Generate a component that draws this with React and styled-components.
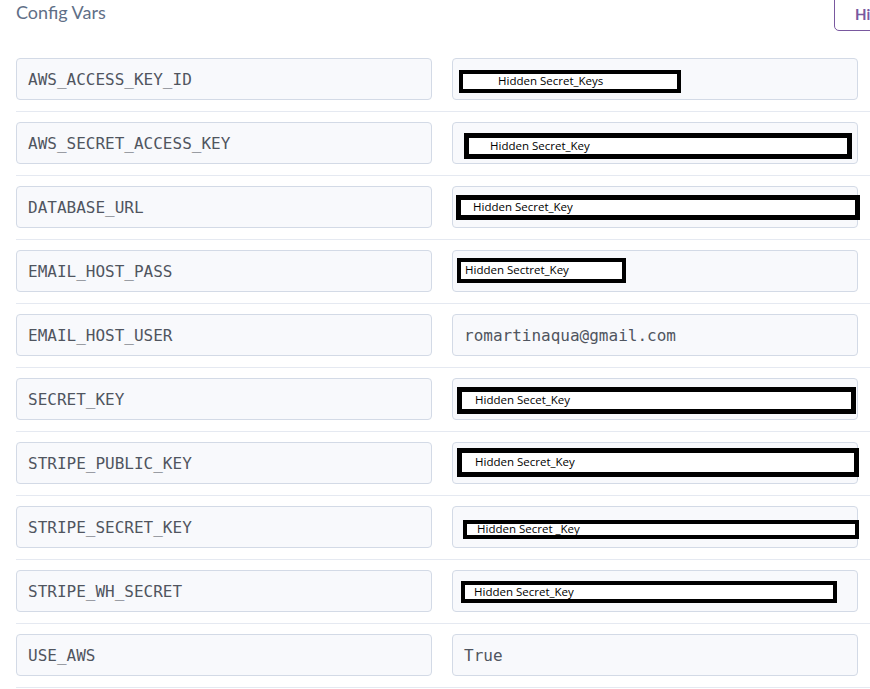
import React from "react";
import styled, { createGlobalStyle } from "styled-components";

const GlobalStyle = createGlobalStyle`
  html, body { margin: 0; padding: 0; background: #ffffff; overflow: hidden; }
  body { font-family: Lato, "Open Sans", sans-serif; }
`;

const Page = styled.div`
  width: 1000px;
  padding-left: 16px;
  box-sizing: border-box;
`;

const Header = styled.div`
  display: flex;
  align-items: flex-start;
  height: 48px;
`;

const Title = styled.h2`
  flex: 0 0 818px;
  margin: 0;
  font-family: Lato, sans-serif;
  font-weight: 400;
  font-size: 18px;
  line-height: 24px;
  color: #5f6f87;
  white-space: nowrap;
`;

const HideButton = styled.button`
  flex: 0 0 auto;
  margin-top: -10px;
  height: 41px;
  padding: 6px 20px 0;
  border: 1px solid #79589f;
  border-radius: 5px;
  background: #ffffff;
  color: #79589f;
  font-family: Lato, sans-serif;
  font-weight: 700;
  font-size: 15px;
  white-space: nowrap;
`;

const Row = styled.div`
  display: grid;
  grid-template-columns: 416px 406px;
  column-gap: 20px;
  padding: 10px 0 11px;
  border-bottom: 1px solid #e5e9f1;
`;

const Field = styled.div`
  position: relative;
  height: 42px;
  box-sizing: border-box;
  border: 1px solid #d3dae6;
  border-radius: 4px;
  background: #f8f9fc;
  padding: 0 11px;
  display: flex;
  align-items: center;
  font-family: "DejaVu Sans Mono", "Liberation Mono", monospace;
  font-size: 16px;
  color: #50555f;
`;

const Redaction = styled.div`
  position: absolute;
  box-sizing: border-box;
  border: ${(p) => p.$b}px solid #000;
  background: #fff;
  display: flex;
  align-items: center;
  padding-bottom: 2px;
  font-family: "Open Sans", "Noto Sans", sans-serif;
  font-size: 11.5px;
  line-height: 13px;
  color: #000;
  white-space: nowrap;
  overflow: hidden;
`;

const rows = [
  { key: "AWS_ACCESS_KEY_ID", r: { l: 7, t: 12, w: 222, h: 23, b: 4, p: 35, text: "Hidden Secret_Keys" } },
  { key: "AWS_SECRET_ACCESS_KEY", r: { l: 12, t: 11, w: 388, h: 26, b: 5, p: 21, text: "Hidden Secret_Key" } },
  { key: "DATABASE_URL", r: { l: 4, t: 9, w: 404, h: 25, b: 5, p: 12, text: "Hidden Secret_Key" } },
  { key: "EMAIL_HOST_PASS", r: { l: 5, t: 8, w: 169, h: 25, b: 4, p: 4, text: "Hidden Sectret_Key" } },
  { key: "EMAIL_HOST_USER", value: "romartinaqua@gmail.com" },
  { key: "SECRET_KEY", r: { l: 5, t: 9, w: 399, h: 27, b: 5, p: 13, text: "Hidden Secet_Key" } },
  { key: "STRIPE_PUBLIC_KEY", r: { l: 5, t: 6, w: 402, h: 29, b: 5, p: 13, text: "Hidden Secret_Key" } },
  { key: "STRIPE_SECRET_KEY", r: { l: 11, t: 14, w: 396, h: 19, b: 4, p: 10, text: "Hidden Secret _Key" } },
  { key: "STRIPE_WH_SECRET", r: { l: 9, t: 11, w: 376, h: 22, b: 4, p: 9, text: "Hidden Secret_Key" } },
  { key: "USE_AWS", value: "True" },
];

export default function App() {
  return (
    <>
      <GlobalStyle />
      <Page>
        <Header>
          <Title>Config Vars</Title>
          <HideButton>Hide Config Vars</HideButton>
        </Header>
        {rows.map((row) => (
          <Row key={row.key}>
            <Field>{row.key}</Field>
            <Field>
              {row.value}
              {row.r && (
                <Redaction
                  $b={row.r.b}
                  style={{
                    left: row.r.l - 1,
                    top: row.r.t - 1,
                    width: row.r.w,
                    height: row.r.h,
                    paddingLeft: row.r.p,
                  }}
                >
                  {row.r.text}
                </Redaction>
              )}
            </Field>
          </Row>
        ))}
      </Page>
    </>
  );
}
